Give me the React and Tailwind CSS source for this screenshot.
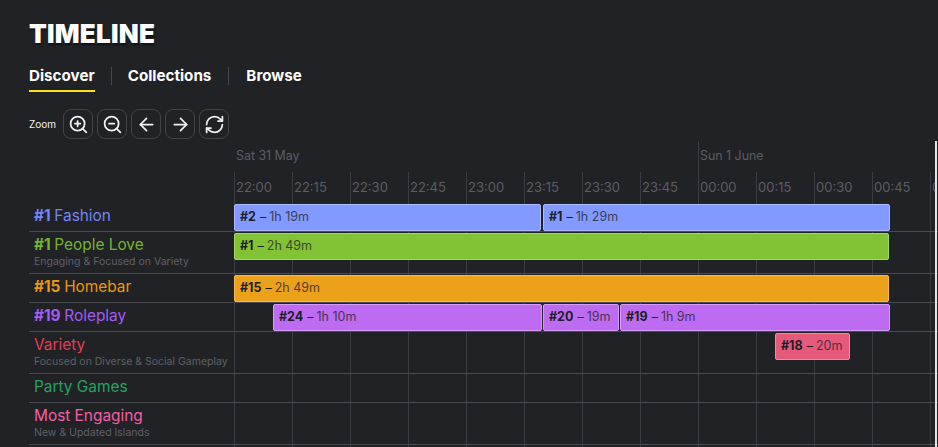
import { ZoomIn, ZoomOut, ArrowLeft, ArrowRight, RefreshCw } from 'lucide-react'

const times = ['22:00', '22:15', '22:30', '22:45', '23:00', '23:15', '23:30', '23:45', '00:00', '00:15', '00:30', '00:45', '01:00']

const rows = [
  {
    rank: '#1', name: 'Fashion', color: 'text-[#6f87f7]', h: 'h-[29px]',
    bars: [
      { x: 0, w: 307, rank: '#2', time: '1h 19m', style: 'bg-[#8299ff] border-[#a9b9ff]' },
      { x: 309, w: 347, rank: '#1', time: '1h 29m', style: 'bg-[#8299ff] border-[#a9b9ff]' },
    ],
  },
  {
    rank: '#1', name: 'People Love', sub: 'Engaging & Focused on Variety', color: 'text-[#74b52f]', h: 'h-[42px]',
    bars: [{ x: 0, w: 655, rank: '#1', time: '2h 49m', style: 'bg-[#82c336] border-[#a3d968]' }],
  },
  {
    rank: '#15', name: 'Homebar', color: 'text-[#e8980f]', h: 'h-[29px]',
    bars: [{ x: 0, w: 655, rank: '#15', time: '2h 49m', style: 'bg-[#eca11b] border-[#f4bb55]' }],
  },
  {
    rank: '#19', name: 'Roleplay', color: 'text-[#a35cf5]', h: 'h-[29px]',
    bars: [
      { x: 39, w: 269, rank: '#24', time: '1h 10m', style: 'bg-[#bd6bf1] border-[#d59cf7]' },
      { x: 309, w: 76, rank: '#20', time: '19m', style: 'bg-[#bd6bf1] border-[#d59cf7]' },
      { x: 386, w: 270, rank: '#19', time: '1h 9m', style: 'bg-[#bd6bf1] border-[#d59cf7]' },
    ],
  },
  {
    name: 'Variety', sub: 'Focused on Diverse & Social Gameplay', color: 'text-[#e53e52]', h: 'h-[42px]',
    bars: [{ x: 541, w: 75, rank: '#18', time: '20m', style: 'bg-[#e55a7a] border-[#f08aa2]' }],
  },
  { name: 'Party Games', color: 'text-[#27a35e]', h: 'h-[29px]', bars: [] },
  { name: 'Most Engaging', sub: 'New & Updated Islands', color: 'text-[#f45fa6]', h: 'h-[42px]', bars: [] },
]

function IconButton({ icon: Icon }) {
  return (
    <button className="flex h-[30px] w-[30px] items-center justify-center rounded-lg border border-[#43444a] text-[#f1f1f1]">
      <Icon size={21} strokeWidth={2} />
    </button>
  )
}

function Row({ row }) {
  return (
    <div className={`flex border-b border-[#4a4b50] ${row.h}`}>
      <div className="flex w-[205px] shrink-0 flex-col pl-[5px] pt-[3px]">
        <div className={`text-[15.4px] leading-5 whitespace-nowrap ${row.color}`}>
          {row.rank && <span className="font-bold">{row.rank} </span>}
          {row.name}
        </div>
        {row.sub && <div className="text-[10.5px] leading-[13px] whitespace-nowrap text-[#5f6066]">{row.sub}</div>}
      </div>
      <div className="relative flex-1">
        {row.bars.map(bar => (
          <div
            key={bar.x}
            className={`absolute top-[1px] flex h-[27px] items-center rounded-[2px] border pl-[5px] text-[12.5px] whitespace-nowrap text-[#1d1e26] ${bar.style}`}
            style={{ left: bar.x, width: bar.w }}
          >
            <span className="font-bold">{bar.rank}</span>
            <span className="ml-1">–</span>
            <span className="ml-[3px] opacity-75">{bar.time}</span>
          </div>
        ))}
      </div>
    </div>
  )
}

export default function App() {
  return (
    <div className="flex h-screen flex-col overflow-hidden bg-[#212226] font-['Inter',sans-serif]">
      <div className="pl-[29px]">
        <h1 className="pt-[19px] text-[26px] leading-[30px] font-black tracking-[0.2px] text-white [text-shadow:1px_2px_2px_rgba(0,0,0,0.5)]">TIMELINE</h1>

        <nav className="mt-[13px] flex items-start text-[15.2px] font-bold text-white">
          <a className="h-[30px] border-b-2 border-[#fde016] leading-[27px]">Discover</a>
          <span className="mt-[5px] mr-[16px] ml-[16px] h-[18px] w-px bg-[#47484d]" />
          <a className="leading-[27px]">Collections</a>
          <span className="mt-[5px] mr-[17px] ml-[17px] h-[18px] w-px bg-[#47484d]" />
          <a className="leading-[27px]">Browse</a>
        </nav>

        <div className="mt-[17px] flex items-center gap-[4px]">
          <span className="mr-[3px] text-[10px] text-[#f1f1f1]">Zoom</span>
          <IconButton icon={ZoomIn} />
          <IconButton icon={ZoomOut} />
          <IconButton icon={ArrowLeft} />
          <IconButton icon={ArrowRight} />
          <IconButton icon={RefreshCw} />
        </div>
      </div>

      <div className="relative mt-[2px] flex-1 pl-[29px]">
        {/* grid lines sit behind the rows */}
        <div className="absolute top-[31px] bottom-0 left-[234px] flex">
          {times.map(t => (
            <div key={t} className="h-full w-[58px] border-l border-[#3b3c41]" />
          ))}
        </div>
        <div className="absolute top-0 left-[698px] h-[31px] w-px bg-[#3b3c41]" />

        <div className="relative ml-[205px] w-[701px] overflow-hidden">
          <div className="flex h-[31px] text-[12.4px] leading-[30px] text-[#5c5d63]">
            <div className="w-[464px] pl-[2px]">Sat 31 May</div>
            <div className="pl-[2px]">Sun 1 June</div>
          </div>
          <div className="flex h-[31px] text-[13px] leading-[30px] text-[#5c5d63]">
            {times.map(t => (
              <div key={t} className="w-[58px] shrink-0 pl-[2px]">{t}</div>
            ))}
          </div>
        </div>

        <div className="relative">
          {rows.map(row => (
            <Row key={row.name} row={row} />
          ))}
        </div>

        {/* now marker */}
        <div className="absolute top-0 bottom-0 left-[935px] w-[2px] bg-[#e4e4e6]" />
      </div>
    </div>
  )
}
